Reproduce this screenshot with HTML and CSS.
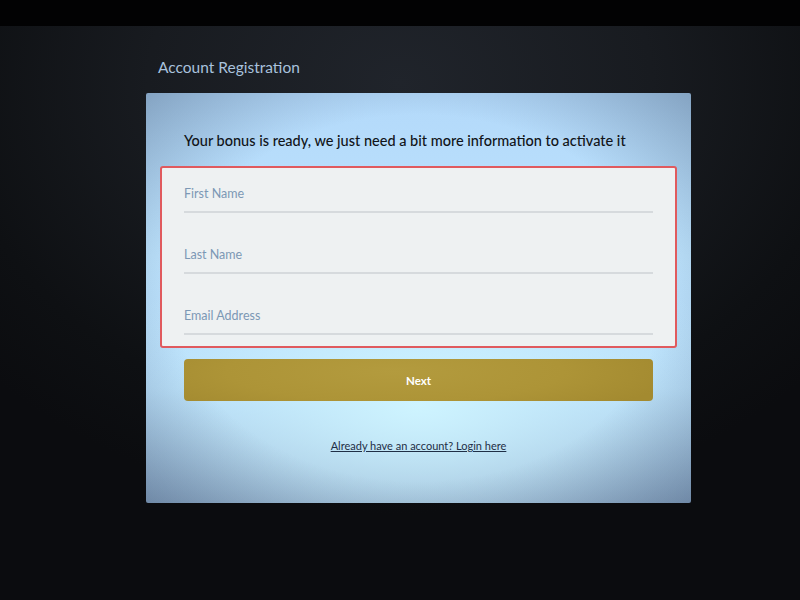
FILE: index.html
```html
<!DOCTYPE html>
<html lang="en">
<head>
<meta charset="utf-8">
<title>Account Registration</title>
<link rel="stylesheet" href="styles.css">
</head>
<body>
<div class="topbar"></div>
<main class="page">
  <h1 class="page-title">Account Registration</h1>
  <section class="card">
    <h2 class="card-heading">Your bonus is ready, we just need a bit more information to activate it</h2>
    <form class="fields">
      <label class="field"><span class="field-label">First Name</span></label>
      <label class="field"><span class="field-label">Last Name</span></label>
      <label class="field"><span class="field-label">Email Address</span></label>
    </form>
    <button class="next-btn" type="button">Next</button>
    <a class="login-link" href="#">Already have an account? Login here</a>
  </section>
</main>
</body>
</html>
```

FILE: styles.css
```css
html, body {
  margin: 0;
  padding: 0;
  height: 600px;
  overflow: hidden;
  background: #0b0c0f;
  font-family: Lato, "Open Sans", "Liberation Sans", sans-serif;
}
.topbar {
  height: 26px;
  background: #020203;
}
.page {
  height: 574px;
  background: radial-gradient(ellipse 70% 75% at 50% 10%, #20242b 0%, #181b20 45%, #0e1013 80%, #0b0c0f 100%);
  padding-top: 1px;
  box-sizing: border-box;
}
.page-title {
  margin: 29px 0 0 158px;
  font-size: 15.5px;
  font-weight: 400;
  line-height: 22px;
  color: #a9c2dd;
}
.card {
  margin: 15px 0 0 146px;
  width: 545px;
  height: 410px;
  box-sizing: border-box;
  padding: 38px 14px 0;
  border-radius: 2px;
  background:
    radial-gradient(ellipse 72% 72% at 50% 50%, rgba(70, 92, 120, 0) 62%, rgba(70, 92, 120, 0.45) 100%),
    radial-gradient(ellipse 62% 42% at 50% 76%, rgba(206, 244, 255, 1) 0%, rgba(206, 244, 255, 0) 100%),
    linear-gradient(to bottom, #b3d9fa 0%, #bde3fd 40%, #b6dcfa 72%, #8eaac9 100%);
  display: flex;
  flex-direction: column;
}
.card-heading {
  margin: 0 0 0 24px;
  font-size: 14.5px;
  font-weight: 500;
  line-height: 20px;
  color: #111418;
}
.fields {
  margin: 15px 0 0;
  border: 2px solid #e05a5e;
  border-radius: 3px;
  background: #eef1f2;
  padding: 16px 22px 11px;
  display: flex;
  flex-direction: column;
  gap: 33px;
}
.field {
  display: block;
  height: 27px;
  border-bottom: 2px solid #d6dadd;
}
.field + .field { margin-top: -1px; }
.field-label {
  display: block;
  font-size: 12.5px;
  line-height: 20px;
  color: #7c98b5;
}
.next-btn {
  margin: 11px 24px 0;
  height: 42px;
  border: none;
  border-radius: 4px;
  background: radial-gradient(ellipse 60% 120% at 45% 30%, #b39b3e 0%, #ad9437 60%, #a38a30 100%);
  color: #ffffff;
  font-family: Lato, "Open Sans", "Liberation Sans", sans-serif;
  font-size: 11.5px;
  font-weight: 700;
  cursor: pointer;
}
.login-link {
  margin: 37px auto 0;
  font-size: 11px;
  line-height: 16px;
  color: #1f2f46;
  text-decoration: underline;
}
```
